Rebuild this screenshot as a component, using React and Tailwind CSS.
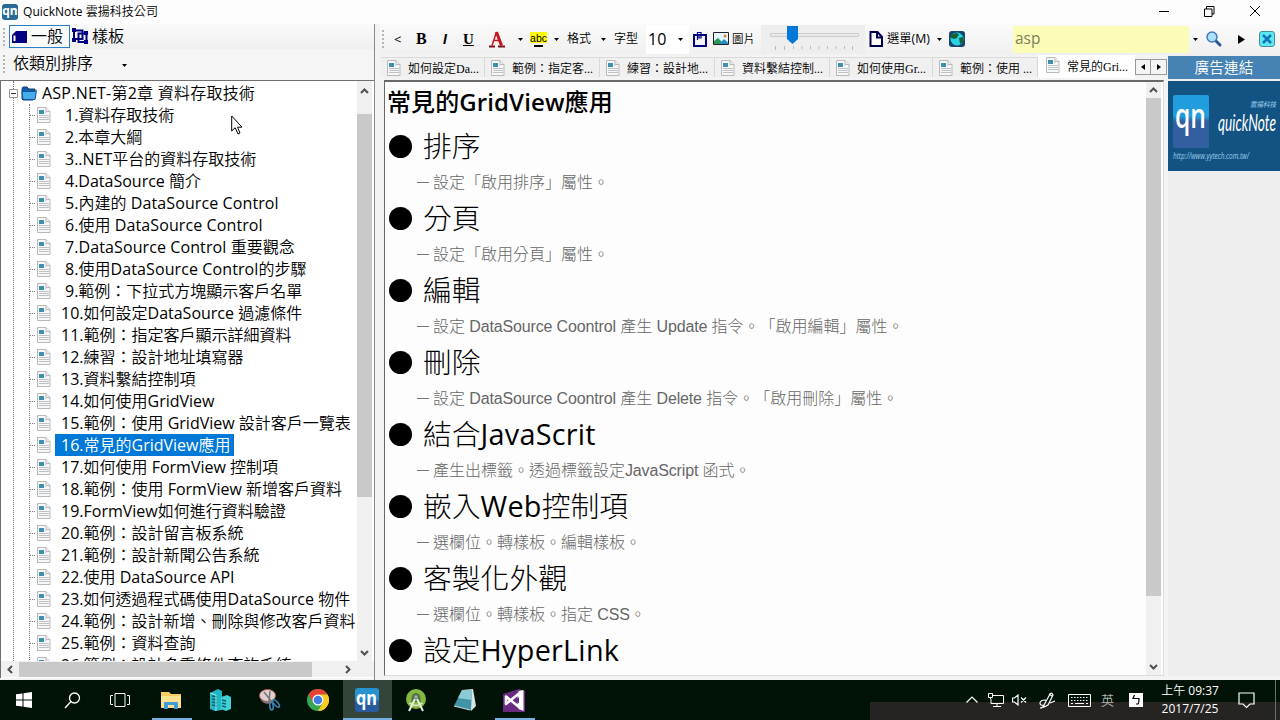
import React from "react";

const notes = [
  "1.資料存取技術",
  "2.本章大綱",
  "3..NET平台的資料存取技術",
  "4.DataSource 簡介",
  "5.內建的 DataSource Control",
  "6.使用 DataSource Control",
  "7.DataSource Control 重要觀念",
  "8.使用DataSource Control的步驟",
  "9.範例：下拉式方塊顯示客戶名單",
  "10.如何設定DataSource 過濾條件",
  "11.範例：指定客戶顯示詳細資料",
  "12.練習：設計地址填寫器",
  "13.資料繫結控制項",
  "14.如何使用GridView",
  "15.範例：使用 GridView 設計客戶一覽表",
  "16.常見的GridView應用",
  "17.如何使用 FormView 控制項",
  "18.範例：使用 FormView 新增客戶資料",
  "19.FormView如何進行資料驗證",
  "20.範例：設計留言板系統",
  "21.範例：設計新聞公告系統",
  "22.使用 DataSource API",
  "23.如何透過程式碼使用DataSource 物件",
  "24.範例：設計新增、刪除與修改客戶資料",
  "25.範例：資料查詢",
  "26.範例：設計多重條件查詢系統",
];
const selected = 15;

const sections = [
  ["排序", "設定「啟用排序」屬性。"],
  ["分頁", "設定「啟用分頁」屬性。"],
  ["編輯", "設定 DataSource Coontrol 產生 Update 指令。「啟用編輯」屬性。"],
  ["刪除", "設定 DataSource Coontrol 產生 Delete 指令。「啟用刪除」屬性。"],
  ["結合JavaScrit", "產生出標籤。透過標籤設定JavaScript 函式。"],
  ["嵌入Web控制項", "選欄位。轉樣板。編輯樣板。"],
  ["客製化外觀", "選欄位。轉樣板。指定 CSS。"],
  ["設定HyperLink", ""],
];

const tabs = [
  ["如何設定Da...", "w-[104px]"],
  ["範例：指定客...", "w-[115px]"],
  ["練習：設計地...", "w-[115px]"],
  ["資料繫結控制...", "w-[115px]"],
  ["如何使用Gr...", "w-[103px]"],
  ["範例：使用 ...", "w-[105px]"],
];

// Gives the Chinese runs of a label their own weight, apart from its Latin runs.
const Mixed = ({ text, cjk = "font-[350]", latin = "" }) => (
  <span className="whitespace-pre">
    {text.match(/[\x20-\x7e]+|[^\x20-\x7e]+/g).map((run, i) => (
      <span key={i} className={run.charCodeAt(0) < 128 ? latin : cjk}>{run}</span>
    ))}
  </span>
);

const Caret = ({ className = "" }) => (
  <svg className={`shrink-0 ${className}`} width="5" height="3" viewBox="0 0 5 3"><path d="M0 0h5L2.5 3z" fill="#000" /></svg>
);

const Chevron = ({ dir }) => {
  const d = { up: "M1 6l3.5-3.5L8 6", down: "M1 3l3.5 3.5L8 3", left: "M6 1L2.5 4.5 6 8", right: "M3 1l3.5 3.5L3 8" }[dir];
  return <svg width="9" height="9" viewBox="0 0 9 9"><path d={d} fill="none" stroke="#505050" strokeWidth="2" /></svg>;
};

const Page = () => (
  <svg className="shrink-0" width="14" height="16" viewBox="0 0 14 16">
    <path d="M.5.5h8.500l4 4v11H.5z" fill="#f8f8f8" stroke="#b9b9b9" />
    <path d="M9 .5v4h4" fill="#eee" stroke="#b9b9b9" />
    <rect x="2" y="3" width="5" height="4" fill="#3f8fae" />
    <path d="M8 5.500h1M2 8.500h10M2 10.500h10M2 12.500h10" stroke="#bcc3c8" />
  </svg>
);

const Grip = () => (
  <svg className="shrink-0" width="2" height="18" viewBox="0 0 2 18"><path d="M1 0v18" stroke="#b4b4b4" strokeWidth="2" strokeDasharray="2 2" /></svg>
);

function TitleBar() {
  return (
    <header className="flex h-6 items-center bg-[#fdfdfd] pb-px pl-0.5">
      <div className="flex h-4 w-4 items-center justify-center rounded-[3px] bg-[#286a98] pb-0.5 text-[12px] leading-none font-bold text-white">qn</div>
      <span className="ml-[5px] pt-px text-[12px] tracking-[0.05px]"><Mixed text="QuickNote 雲揚科技公司" /></span>
      <svg className="mr-[15px] ml-auto" width="106" height="14" viewBox="0 0 106 14" fill="none" stroke="#000">
        <path d="M0 6.500h10M45.500 4h7.500v7.500h-7.500zM47.500 4V1.500h7.500V9H53M91 1l10 10M101 1L91 11" />
      </svg>
    </header>
  );
}

function Sidebar() {
  return (
    <aside className="flex w-[375px] shrink-0 flex-col border-r border-[#8a8a8a] bg-[#f3f3f3]">
      <div className="flex h-[25px] items-center bg-linear-to-b from-[#fafafa] to-[#f0f0f0] pl-[3px] font-[350]">
        <Grip />
        <div className="ml-1 flex h-[23px] w-[61px] items-center border border-[#2a80c0] bg-[#f7fbfe]">
          <svg className="ml-px" width="17" height="14" viewBox="0 0 17 14"><path d="M5 1h11v12H1V5z" fill="#000080" /><path d="M2.500 5.500h2V11h-2z" fill="#fff" /></svg>
          <span className="ml-[3px] pb-0.5 text-base leading-none">一般</span>
        </div>
        <svg className="ml-[2px]" width="17" height="17" viewBox="0 0 17 17" fill="none" stroke="#000080">
          <path d="M2 2.500h8.500v8.500H2zM6.500 5.500h8v8.500h-8z" strokeWidth="2" />
          <path d="M0 0h4v4H0zM0 10h4v4H0zM12 3h4v4h-4zM12 12h4v4h-4z" fill="#000080" stroke="none" />
        </svg>
        <span className="ml-[3px] pb-0.5 text-base leading-none">樣板</span>
      </div>
      <div className="flex h-[31px] items-center bg-[#f5f5f5] pb-0.5 pl-[3px]">
        <Grip />
        <span className="ml-[8px] w-[109px] pb-px text-base leading-none font-[350]">依類別排序</span>
        <Caret className="mt-1" />
      </div>
      <div className="flex h-[598px] flex-col border-t border-l border-[#707070] bg-white">
        <div className="flex h-[580px]">
          <div className="relative w-[356px] overflow-hidden pt-px">
            <div className="absolute top-0 left-[12px] h-full border-l border-dotted border-[#777]" />
            <div className="absolute top-[23px] left-[28px] h-full border-l border-dotted border-[#777]" />
            <div className="flex h-[22px] items-center whitespace-nowrap">
              <svg className="relative ml-[8px] shrink-0" width="11" height="9" viewBox="0 0 11 9"><path d="M.5.5h8v8h-8z" fill="#fff" stroke="#999" /><path d="M2 4.500h5" stroke="#333" /></svg>
              <svg className="ml-[1px] shrink-0" width="16" height="15" viewBox="0 0 16 15"><path d="M1 3l1-2h4l2 2h6v9l-2 2H2l-1-1z" fill="#135aa8" stroke="#123f7b" /><path d="M1 5.500h12.500l2-1-1.500 9H2z" fill="#43aee8" stroke="#1553a0" /></svg>
              <span className="ml-[5px] text-base leading-none tracking-[0.23px]"><Mixed text="ASP.NET-第2章 資料存取技術" /></span>
            </div>
            {notes.map((n, i) => (
              <div key={n} className="flex h-[22px] items-center pl-[29px] whitespace-nowrap">
                <span className="mr-[2px] w-[5px] shrink-0 border-t border-dotted border-[#777]" />
                <Page />
                <span className={`flex h-[22px] items-center px-[6px] text-base leading-none ${i < 9 ? "ml-[8px]" : "ml-[4px]"} ${i === selected ? "bg-[#0078d7] pr-[3px] text-white" : ""}`}><Mixed text={n} latin={i > 3 && i < 8 ? "tracking-[0.1px]" : ""} /></span>
              </div>
            ))}
          </div>
          <div className="flex w-[15px] flex-col items-center bg-[#f0f0f0] py-1">
            <div className="flex h-[29px] items-start pt-0.5"><Chevron dir="up" /></div>
            <div className="h-[383px] w-[15px] bg-[#c9c9c9]" />
            <div className="mt-auto"><Chevron dir="down" /></div>
          </div>
        </div>
        <div className="flex h-[16px] items-center bg-[#f0f0f0] pl-[5px]">
          <Chevron dir="left" />
          <div className="ml-[4px] h-[15px] w-[293px] bg-[#c9c9c9]" />
          <span className="ml-[31px]"><Chevron dir="right" /></span>
        </div>
      </div>
    </aside>
  );
}

function EditorToolbar() {
  return (
    <div className="flex h-[31px] items-center bg-linear-to-b from-[#fafafa] to-[#f0f0f0] pb-px pl-[2px] text-[12px] leading-none whitespace-nowrap">
      <Grip />
      <span className="ml-[10px] w-[22px] text-[13px]">&lt;</span>
      <b className="w-[26px] font-['Liberation_Serif'] text-[16px]">B</b>
      <b className="w-[21px] pl-px font-['Liberation_Sans'] text-[14px] italic">I</b>
      <b className="w-[26px] font-['Liberation_Serif'] text-[15px] underline">U</b>
      <svg className="shrink-0" width="17" height="19" viewBox="0 0 17 19"><path d="M7.500 2L3 15.500M5 10.500h6" fill="none" stroke="#c8141e" strokeWidth="1.500" /><path d="M7.500 2l5 13.500" fill="none" stroke="#c8141e" strokeWidth="3" /><path d="M0 16.500h6M9 16.500h7" stroke="#7c1018" strokeWidth="2" /></svg>
      <Caret className="mr-[7px] ml-[12px]" />
      <svg className="shrink-0" width="17" height="18" viewBox="0 0 17 18"><path d="M0 2h17v11H0z" fill="#ff0" /><path d="M4 16h9" stroke="#000" strokeWidth="2" /><text x="0" y="11.500" fontSize="10.500" textLength="17" fontFamily="Liberation Sans">abc</text></svg>
      <Caret className="mr-[8px] ml-[7px]" />
      <span className="w-[34px] font-[350]">格式</span>
      <Caret className="mr-[8px]" />
      <span className="w-[32px] font-[350]">字型</span>
      <div className="flex h-[29px] w-[43px] items-center bg-white pl-[2px]">
        <span className="w-[30px] pb-px text-[16px]">10</span>
        <Caret />
      </div>
      <svg className="ml-[4px] shrink-0" width="14" height="16" viewBox="0 0 14 16" fill="none" stroke="#000080"><path d="M1 4h12v11H1z" strokeWidth="2" /><path d="M4.500 9V1.500H8V7H6V3" strokeWidth="1.200" /></svg>
      <svg className="ml-[6px] shrink-0" width="16" height="14" viewBox="0 0 16 14"><path d="M.5.5h15v12H.5z" fill="#e4f5ff" stroke="#222" /><path d="M1 9l4-3 4 4 3-2 3 3v1H1z" fill="#2c9a55" /><path d="M6 12l5-5 4 4v1z" fill="#278bd0" /><circle cx="12" cy="4" r="1.500" fill="#e97b18" /></svg>
      <span className="ml-[3px] w-[29px] text-[11.500px] font-[350]">圖片</span>
      <div className="flex h-[29px] w-[104px] items-center bg-[#eee]">
        <svg width="104" height="29" viewBox="0 0 104 29"><path d="M9.500 8.500h88v3h-88z" fill="#e7eaea" stroke="#ccc" /><path d="M14.500 21v4M23.500 21v4M32.500 21v3M41 21v3M49.500 21v3M58 21v3M66.500 21v3M75 21v3M83.500 21v3M91.500 21v4" stroke="#bbb" /><path d="M26 1h11v13l-5.500 5-5.500-5z" fill="#0078d7" /></svg>
      </div>
      <svg className="ml-[4px] shrink-0" width="14" height="16" viewBox="0 0 14 16"><path d="M1.500 1h7l4.500 5v9h-11.500z" fill="#fff" stroke="#000050" strokeWidth="2" /><path d="M8 1v5.500h5" fill="none" stroke="#000050" strokeWidth="2" /></svg>
      <span className="ml-[4px] w-[50px] text-[12.300px]"><Mixed text="選單(M)" /></span>
      <Caret />
      <svg className="ml-[7px] shrink-0" width="16" height="16" viewBox="0 0 16 16"><rect width="16" height="16" rx="3" fill="#184572" /><circle cx="8" cy="8" r="6.500" fill="#29d2e3" /><path d="M2 4l5-2 3 1-2 4-3 1-3-1z" fill="#126331" /><path d="M10 7l4-1v5l-3 2z" fill="#126331" /></svg>
      <div className="ml-[48px] flex h-[27px] w-[176px] items-center bg-[#fbfdb7] pb-px pl-[2px] text-[15.500px] text-[#80805e]">asp</div>
      <Caret className="ml-[4px]" />
      <svg className="ml-[8px] shrink-0" width="17" height="17" viewBox="0 0 17 17"><path d="M9 9l5 5" stroke="#2b5796" strokeWidth="3" strokeLinecap="round" /><circle cx="6" cy="6" r="5" fill="#aee0fa" stroke="#447bb9" strokeWidth="1.500" /></svg>
      <svg className="ml-[15px] shrink-0" width="7" height="9" viewBox="0 0 7 9"><path d="M0 0l7 4.500L0 9z" /></svg>
      <svg className="ml-[14px] shrink-0" width="16" height="16" viewBox="0 0 16 16"><rect x=".5" y=".5" width="15" height="15" rx="2.500" fill="#5ee8f4" stroke="#4a8c98" /><path d="M4 4l8 8M12 4l-8 8" stroke="#1474b8" strokeWidth="2.500" /></svg>
    </div>
  );
}

function Tabs() {
  return (
    <div className="flex h-[25px] items-end pb-[2px] font-['Liberation_Serif','Noto_Sans_CJK_TC',serif] text-[12px] leading-none whitespace-nowrap">
      <div className="flex pl-px">
        {tabs.map(([t, w]) => (
          <div key={t} className={`flex h-[20px] items-center gap-[7px] border-t border-r border-[#d9d9d9] bg-[#f0f0f0] pl-[6px] ${w}`}>
            <Page /><span className="pt-0.5"><Mixed text={t} /></span>
          </div>
        ))}
        <div className="-mt-[2px] flex h-[23px] w-[97px] items-center gap-[7px] bg-white pb-[3px] pl-[8px]">
          <Page /><span className="pt-1"><Mixed text="常見的Gri..." /></span>
        </div>
      </div>
      <div className="mr-[2px] mb-[3px] ml-auto flex">
        <div className="flex h-[16px] w-[16px] items-center justify-center border border-[#999] bg-[#f4f4f4]"><svg width="4" height="6"><path d="M4 0L0 3l4 3z" /></svg></div>
        <div className="flex h-[16px] w-[16px] items-center justify-center border border-l-0 border-[#999] bg-[#f4f4f4]"><svg width="4" height="6"><path d="M0 0l4 3-4 3z" /></svg></div>
      </div>
    </div>
  );
}

function Editor() {
  return (
    <div className="mr-[4px] ml-[4px] flex h-[596px] border border-t-2 border-[#ddd] border-t-[#696969] border-l-[#696969] bg-[#fdfdfd]">
      <article className="w-[761px] overflow-hidden pl-[2px] [text-spacing-trim:space-all]">
        <h1 className="flex h-[42px] items-center pb-[3px] text-[24px] leading-none font-semibold tracking-[0.1px]"><Mixed text="常見的GridView應用" cjk="font-medium" /></h1>
        {sections.map(([t, d]) => (
          <section key={t} className="h-[72px] whitespace-nowrap">
            <h2 className="flex h-[45px] items-center text-[28.800px] leading-none">
              <span className="mr-[11px] ml-[2px] h-[23px] w-[23px] shrink-0 rounded-full bg-black" />
              <Mixed text={t} cjk="font-light" latin="tracking-[0.25px]" />
            </h2>
            <p className="flex h-[27px] items-center pl-[30px] font-['Liberation_Sans','Noto_Sans_CJK_TC',sans-serif] text-base leading-none font-light text-[#666]">
              {d && <span className="mr-[4px] h-px w-[12px] bg-[#777]" />}
              {d && <Mixed text={d} cjk="font-light" latin="tracking-[-0.15px]" />}
            </p>
          </section>
        ))}
      </article>
      <div className="flex w-[15px] flex-col items-center bg-[#f0f0f0] py-1">
        <div className="h-[12px]"><Chevron dir="up" /></div>
        <div className="h-[498px] w-[15px] bg-[#c9c9c9]" />
        <div className="mt-auto"><Chevron dir="down" /></div>
      </div>
    </div>
  );
}

function Ad() {
  return (
    <aside className="w-[112px] shrink-0 bg-[#eee]">
      <h2 className="mt-px flex h-[23px] items-center justify-center bg-[#4682b4] text-[14.700px] leading-none font-[350] text-white">廣告連結</h2>
      <div className="mt-[2px] flex h-[90px] bg-[#125383] pt-[14px] pl-[5px] text-white">
        <svg width="107" height="76" viewBox="0 0 107 76">
          <defs>
            <linearGradient id="logo" x2="0" y2="1"><stop offset=".4" stopColor="#219cdc" /><stop offset=".5" stopColor="#315f9f" /></linearGradient>
          </defs>
          <rect width="36" height="53" rx="2" fill="url(#logo)" />
          <text x="2" y="33" textLength="31" lengthAdjust="spacingAndGlyphs" fontFamily="Open Sans" fontSize="34" fontWeight="600" fill="#fff">qn</text>
          <text x="77" y="12" textLength="26" lengthAdjust="spacingAndGlyphs" fontFamily="Noto Sans CJK TC" fontSize="7" fontWeight="500" fontStyle="italic" fill="#8fc2e5">雲揚科技</text>
          <text x="45" y="36" textLength="58" lengthAdjust="spacingAndGlyphs" fontFamily="Lato" fontSize="24" fontStyle="italic" fill="#fff">quickNote</text>
          <text x="0" y="64" textLength="76" lengthAdjust="spacingAndGlyphs" fontFamily="Open Sans" fontSize="8.500" fontStyle="italic" fill="#9fd0ec">http://www.yytech.com.tw/</text>
        </svg>
      </div>
    </aside>
  );
}

const TaskIcon = ({ children, active, open }) => (
  <div className={`flex h-full w-[49px] flex-col items-center ${active ? "bg-[#33443b]" : ""}`}>
    <div className="flex h-[38px] items-center pt-[2px] pr-px">{children}</div>
    {(active || open) && <div className={`h-[2px] bg-[#76b0e3] ${active ? "w-[49px]" : "w-[40px]"}`} />}
  </div>
);

function Taskbar() {
  return (
    <footer className="flex h-[40px] bg-[#001306] text-white">
      <div className="flex w-[147px] items-center">
        <div className="flex w-[48px] justify-center"><svg width="16" height="16" viewBox="0 0 16 16" fill="#fff"><path d="M0 2.300l6.500-.9v6.100H0zM7.500 1.200L16 0v7.500H7.500zM0 8.500h6.500v6.100L0 13.700zM7.500 8.500H16V16l-8.500-1.200z" /></svg></div>
        <div className="flex w-[48px] justify-center"><svg width="17" height="17" viewBox="0 0 17 17" fill="none" stroke="#fff" strokeWidth="1.300"><circle cx="10.500" cy="6" r="5" /><path d="M7 9.500L1 16" /></svg></div>
        <div className="flex w-[48px] justify-center"><svg width="20" height="14" viewBox="0 0 20 14" fill="none" stroke="#fff"><path d="M5 .5h10v13H5zM3 2.500H.5v9H3M17 2.500h2.500v9H17" /></svg></div>
      </div>
      <TaskIcon open><svg width="22" height="19" viewBox="0 0 22 19"><path d="M1 1h8l2 2h10v14H1z" fill="#f3cd62" /><path d="M1 5h20v12H1z" fill="#ffe391" /><path d="M4 18v-6q0-1 1-1h12q1 0 1 1v6h-4v-4H8v4z" fill="#429cd6" /></svg></TaskIcon>
      <TaskIcon><svg width="24" height="24" viewBox="0 0 24 24"><path d="M2 5l8-4 4 2v19l-7 1-5-2z" fill="#20b6c3" /><path d="M13 9l6-2 4 2v12l-5 2-5-2z" fill="#42cfd5" /><path d="M4 8l5 1M4 11l5 1M4 14l5 1M4 17l5 1M14 12l4 1M14 15l4 1M14 18l4 1" stroke="#08646f" strokeWidth="1.400" /><path d="M2 5l6 2v16" stroke="#8eeef0" fill="none" /></svg></TaskIcon>
      <TaskIcon><svg width="23" height="24" viewBox="0 0 23 24"><ellipse cx="9.500" cy="7.500" rx="8" ry="6" fill="#ddd0cf" stroke="#b85a58" /><path d="M2 10q5 6 12 2l1 3Q5 18 2 10" fill="#8a7675" /><path d="M6 4l8 10M12 3l-1 10" stroke="#777" strokeWidth="1.500" /><g fill="none" stroke="#3b83b8" strokeWidth="1.600"><ellipse cx="18" cy="15.500" rx="2" ry="4.500" transform="rotate(-42 18 15.500)" /><ellipse cx="13.500" cy="18" rx="1.700" ry="4" transform="rotate(-5 13.500 18)" /></g></svg></TaskIcon>
      <TaskIcon><svg width="22" height="22" viewBox="0 0 22 22"><circle cx="11" cy="11" r="11" fill="#34a853" /><path d="M1.470 5.500A11 11 0 0120.530 5.500L11 6 6.200 13.800z" fill="#e84235" /><path d="M20.530 5.500A11 11 0 0111 22l4.800-8.200L11 5.500z" fill="#fbc91c" /><circle cx="11" cy="11" r="5.500" fill="#fff" /><circle cx="11" cy="11" r="4.300" fill="#3f7de0" /></svg></TaskIcon>
      <TaskIcon active><svg width="24" height="24" viewBox="0 0 24 24"><defs><linearGradient id="task" x2="0" y2="1"><stop offset=".45" stopColor="#2892d0" /><stop offset=".6" stopColor="#275b9e" /></linearGradient></defs><rect width="24" height="24" rx="3" fill="url(#task)" /><text x="1" y="17" textLength="21" lengthAdjust="spacingAndGlyphs" fontFamily="Open Sans" fontSize="19" fontWeight="700" fill="#fff">qn</text></svg></TaskIcon>
      <TaskIcon><svg width="22" height="24" viewBox="0 0 22 24"><circle cx="11" cy="11" r="10" fill="#86b940" /><path d="M6.500 10a4.500 5 0 019 0v4h-9z" fill="#55734b" /><path d="M10 11L4 23M12 11l6 12" fill="none" stroke="#e3efdc" strokeWidth="2" /><path d="M4.500 15q6.500 5 13 0" fill="none" stroke="#e3efdc" strokeWidth="1.300" /><circle cx="11" cy="9" r="1.700" fill="#aaa" /></svg></TaskIcon>
      <TaskIcon><svg width="24" height="22" viewBox="0 0 24 22"><path d="M9 1l11-1 3 17-5 5z" fill="#d8e5e4" /><path d="M9 1h10l-1 20-17-4z" fill="#4293a5" /><path d="M9 1h10l-.5 10L5 9z" fill="#8ccbd5" /><path d="M1 17l16 4" stroke="#cfe5e6" /></svg></TaskIcon>
      <TaskIcon open><svg width="22" height="23" viewBox="0 0 22 23"><path d="M0 5l16-5 6 2v21H0z" fill="#6b2a82" /><path d="M16 4.500L3 15V7.500L16 18z" fill="none" stroke="#fff" strokeWidth="2.600" strokeLinejoin="round" /><path d="M15.500 2l5-1v21l-5-2z" fill="#fff" /><path d="M16 8v6.500L12.500 11.300z" fill="#6b2a82" /></svg></TaskIcon>
      <div className="ml-auto flex w-[410px] items-center bg-linear-to-b from-[#001306] from-[22px] to-[#252423] to-[22px] pl-[96px]">
        <svg width="12" height="8" viewBox="0 0 12 8"><path d="M.5 6.500L6 1l5.500 5.500" stroke="#fff" fill="none" strokeWidth="1.200" /></svg>
        <svg className="ml-[10px]" width="16" height="14" viewBox="0 0 16 14" fill="none" stroke="#fff"><path d="M5 2.500h10.500v8H3V6M.5.500h4v4h-4zM2.500 4.500V6M9 10.500v3M5 13.500h8" /></svg>
        <svg className="ml-[8px]" width="15" height="12" viewBox="0 0 15 12" fill="none" stroke="#fff" strokeWidth="1.200"><path d="M.5 4h2L6 1v10L2.500 8h-2zM9 3.500l5 5M14 3.500l-5 5" /></svg>
        <svg className="ml-[12px]" width="17" height="17" viewBox="0 0 17 17" fill="none" stroke="#fff" strokeWidth="1.200"><path d="M5 13l6-11q2-2 3 1l-5 10-4 2zM7 8Q1 8 1 11q0 3 4 2-1 3-4 3M11 11l5-2M10 2l3 2" /></svg>
        <svg className="ml-[12px]" width="23" height="13" viewBox="0 0 23 13" fill="none" stroke="#fff"><path d="M.5.5h22v12H.5z" /><path d="M3 3.500h18M3 6.500h18" strokeDasharray="1.500 1.500" /><path d="M3 9.500h2M7 9.500h9M18 9.500h2" /></svg>
        <span className="ml-[10px] text-[13px] leading-none font-[350] text-[#b4b4b4]">英</span>
        <svg className="ml-[15px]" width="14" height="14" viewBox="0 0 14 14"><path d="M0 0h14v14H0z" fill="#fff" /><path d="M5.500 2L4 5.500h6Q10 10 9 11H7" fill="none" stroke="#000" strokeWidth="1.200" /></svg>
        <div className="ml-[13px] flex w-[68px] flex-col items-center text-[12px] leading-[18px]"><Mixed text="上午 09:37" /><span>2017/7/25</span></div>
        <svg className="ml-[14px]" width="17" height="17" viewBox="0 0 17 17" fill="none" stroke="#fff" strokeWidth="1.200"><path d="M1 1h15v11h-4l-3.500 3.500L5 12H1z" /></svg>
        <div className="mr-[4px] ml-auto h-full border-l border-[#66706a]" />
      </div>
    </footer>
  );
}

export default function App() {
  return (
    <div className="relative flex h-[720px] w-[1280px] flex-col overflow-hidden bg-[#f3f3f3] font-['Open_Sans','Noto_Sans_CJK_TC',sans-serif] text-black">
      <TitleBar />
      <main className="flex h-[656px]">
        <Sidebar />
        <div className="ml-[5px] flex w-[900px] flex-col">
          <EditorToolbar />
          <div className="flex">
            <div className="w-[788px]">
              <Tabs />
              <Editor />
            </div>
            <Ad />
          </div>
        </div>
      </main>
      <Taskbar />
      <svg className="absolute top-[115px] left-[231px]" width="12" height="20" viewBox="0 0 12 20"><path d="M.7 1v15l3.500-3.300L7 19l2-1-2.500-5.800H11z" fill="#fff" stroke="#000" /></svg>
    </div>
  );
}
